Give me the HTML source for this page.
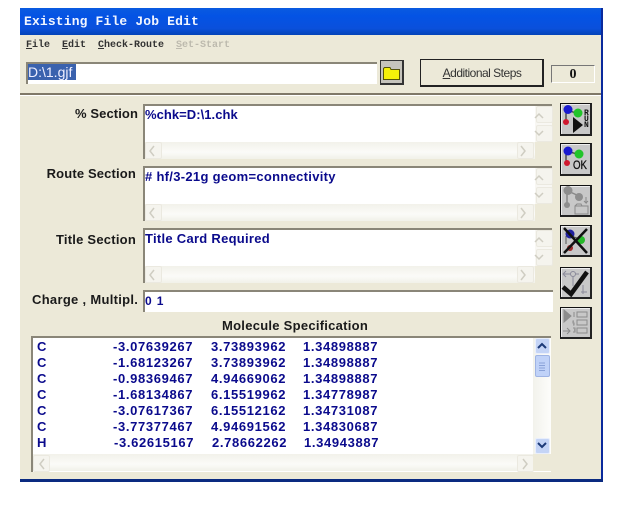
<!DOCTYPE html>
<html><head><meta charset="utf-8">
<style>
html,body{margin:0;padding:0;background:#fff;}
body{width:640px;height:512px;position:relative;overflow:hidden;}
div,span,svg{position:absolute;box-sizing:border-box;}
.t{white-space:pre;font-family:"Liberation Sans",sans-serif;font-size:13px;font-weight:bold;line-height:14px;}
.lab{color:#1a1a1a;text-align:right;}
.val{color:#0a0a8c;}
.mono{font-family:"Liberation Mono",monospace;white-space:pre;}
.m{font:bold 10px/13px "Liberation Mono",monospace;white-space:pre;color:#333;top:39px;}
.box{background:#fff;border-top:2px solid #8a8678;border-left:2px solid #8a8678;}
.hs{position:absolute;height:17px;background:linear-gradient(#f2f1ea,#fbfbf8 60%,#f1f1e9);}
.sb{position:absolute;width:17px;height:17px;border:1px solid #ebe9e0;background:#f5f4ee;border-radius:2px;}
.cn{position:absolute;width:17px;height:17px;background:#ece9d8;}
.ib{position:absolute;left:560px;width:32px;height:32px;background:#c8c8c8;border:1px solid #111;border-right:2px solid #222;border-bottom:2px solid #222;box-shadow:inset 1px 1px 0 #eee;}
.row{position:absolute;color:#0a0a8c;font:bold 13px/16px "Liberation Sans",sans-serif;letter-spacing:.65px;white-space:pre;}
</style></head><body>
<div style="left:20px;top:8px;width:583px;height:474px;background:#ece9d8;"></div>
<div style="left:20px;top:8px;width:583px;height:27px;background:linear-gradient(#0a5be0,#0453e4 30%,#0a50dc 75%,#0443b8);"></div>
<div style="left:601px;top:8px;width:2px;height:474px;background:#0a2a9c;"></div>
<div style="left:20px;top:479px;width:583px;height:3px;background:#0a2a80;"></div>

<div class="t mono" style="left:24px;top:14px;color:#f2f6ff;font-family:'Liberation Mono',monospace;font-size:13px;letter-spacing:.15px;line-height:15px;">Existing File Job Edit</div>

<div class="m" style="left:26px;"><u>F</u>ile</div>
<div class="m" style="left:62px;"><u>E</u>dit</div>
<div class="m" style="left:98px;"><u>C</u>heck-Route</div>
<div class="m" style="left:176px;color:#bdbaae;"><u>S</u>et-Start</div>

<div class="box" style="left:26px;top:62px;width:351px;height:22px;"></div>
<div style="left:28px;top:64px;width:48px;height:16px;background:#3a62ae;"></div>
<div class="t" style="left:28px;top:65px;color:#eef;font-weight:normal;font-size:14px;">D:\1.gjf</div>

<div style="left:380px;top:60px;width:24px;height:25px;background:#c6c4bc;border:1px solid #333;border-right:2px solid #333;border-bottom:2px solid #333;"></div>
<svg style="left:383px;top:66px" width="18" height="14" viewBox="0 0 18 14"><path d="M.5 2.500V13.500H16.500V3.500H8L7 1.500H1.500Z" fill="#f5f00a" stroke="#55530a"/></svg>

<div style="left:420px;top:59px;width:124px;height:28px;background:#ece9d8;border:1px solid #222;border-right:2px solid #222;border-bottom:2px solid #222;"></div>
<div class="t" style="left:420px;top:66px;width:124px;text-align:center;font-weight:normal;font-size:12px;color:#333;letter-spacing:-.5px;"><u>A</u>dditional Steps</div>

<div style="left:551px;top:65px;width:44px;height:18px;border-top:1px solid #777;border-left:1px solid #777;border-right:1px solid #fff;border-bottom:1px solid #fff;"></div>
<div class="t" style="left:551px;top:68px;width:44px;text-align:center;font-family:'Liberation Serif',serif;font-size:14px;color:#111;">0</div>

<div style="left:20px;top:93px;width:581px;height:2px;background:#7f7868;"></div>
<div style="left:20px;top:95px;width:581px;height:1px;background:#fff;"></div>

<!-- labels -->
<div class="t lab" style="left:30px;top:107px;width:108px;letter-spacing:.1px;">% Section</div>
<div class="t lab" style="left:30px;top:167px;width:106px;letter-spacing:.15px;">Route Section</div>
<div class="t lab" style="left:30px;top:233px;width:106px;letter-spacing:.23px;">Title Section</div>
<div class="t lab" style="left:32px;top:293px;width:110px;letter-spacing:.3px;text-align:left;">Charge , Multipl.</div>
<div class="t lab" style="left:222px;top:319px;width:150px;letter-spacing:.27px;text-align:left;">Molecule Specification</div>

<!-- section 1 -->
<div class="box" style="left:143px;top:104px;width:409px;height:55px;"></div>
<div class="t val" style="left:145px;top:108px;letter-spacing:.05px;">%chk=D:\1.chk</div>
<div class="hs" style="left:145px;top:142px;width:390px;"></div>
<div class="sb" style="left:145px;top:142px;"></div>
<div class="sb" style="left:517px;top:142px;"></div>
<div class="cn" style="left:535px;top:142px;"></div>
<div style="left:535px;top:106px;width:17px;height:36px;background:#f8f7f3;"></div>
<div class="sb" style="left:536px;top:106px;"></div>
<div class="sb" style="left:536px;top:125px;"></div>
<!-- section 2 -->
<div class="box" style="left:143px;top:166px;width:409px;height:55px;"></div>
<div class="t val" style="left:145px;top:170px;letter-spacing:.3px;"># hf/3-21g geom=connectivity</div>
<div class="hs" style="left:145px;top:204px;width:390px;"></div>
<div class="sb" style="left:145px;top:204px;"></div>
<div class="sb" style="left:517px;top:204px;"></div>
<div class="cn" style="left:535px;top:204px;"></div>
<div style="left:535px;top:168px;width:17px;height:36px;background:#f8f7f3;"></div>
<div class="sb" style="left:536px;top:168px;"></div>
<div class="sb" style="left:536px;top:187px;"></div>
<!-- section 3 -->
<div class="box" style="left:143px;top:228px;width:409px;height:55px;"></div>
<div class="t val" style="left:145px;top:232px;letter-spacing:.28px;">Title Card Required</div>
<div class="hs" style="left:145px;top:266px;width:390px;"></div>
<div class="sb" style="left:145px;top:266px;"></div>
<div class="sb" style="left:517px;top:266px;"></div>
<div class="cn" style="left:535px;top:266px;"></div>
<div style="left:535px;top:230px;width:17px;height:36px;background:#f8f7f3;"></div>
<div class="sb" style="left:536px;top:230px;"></div>
<div class="sb" style="left:536px;top:249px;"></div>
<svg style="left:143px;top:104px" width="409" height="180" viewBox="0 0 409 180" fill="none" stroke="#cfcdc2" stroke-width="1.500">
<path d="M11 42l-4 5 4 5M378 42l4 5-4 5M392 14l4-4 4 4M392 27l4 4 4-4"/>
<path d="M11 104l-4 5 4 5M378 104l4 5-4 5M392 76l4-4 4 4M392 89l4 4 4-4"/>
<path d="M11 166l-4 5 4 5M378 166l4 5-4 5M392 138l4-4 4 4M392 151l4 4 4-4"/>
</svg>

<!-- charge -->
<div class="box" style="left:143px;top:290px;width:410px;height:22px;"></div>
<div class="t val" style="left:145px;top:294px;font-size:12px;letter-spacing:.9px;">0 1</div>

<!-- list -->
<div class="box" style="left:31px;top:336px;width:520px;height:136px;"></div>
<div class="row" style="left:37px;top:339px;">C</div><div class="row" style="left:113px;top:339px;">-3.07639267</div><div class="row" style="left:211px;top:339px;">3.73893962</div><div class="row" style="left:303px;top:339px;">1.34898887</div>
<div class="row" style="left:37px;top:355px;">C</div><div class="row" style="left:113px;top:355px;">-1.68123267</div><div class="row" style="left:211px;top:355px;">3.73893962</div><div class="row" style="left:303px;top:355px;">1.34898887</div>
<div class="row" style="left:37px;top:371px;">C</div><div class="row" style="left:113px;top:371px;">-0.98369467</div><div class="row" style="left:211px;top:371px;">4.94669062</div><div class="row" style="left:303px;top:371px;">1.34898887</div>
<div class="row" style="left:37px;top:387px;">C</div><div class="row" style="left:113px;top:387px;">-1.68134867</div><div class="row" style="left:211px;top:387px;">6.15519962</div><div class="row" style="left:303px;top:387px;">1.34778987</div>
<div class="row" style="left:37px;top:403px;">C</div><div class="row" style="left:113px;top:403px;">-3.07617367</div><div class="row" style="left:211px;top:403px;">6.15512162</div><div class="row" style="left:303px;top:403px;">1.34731087</div>
<div class="row" style="left:37px;top:419px;">C</div><div class="row" style="left:113px;top:419px;">-3.77377467</div><div class="row" style="left:211px;top:419px;">4.94691562</div><div class="row" style="left:303px;top:419px;">1.34830687</div>
<div class="row" style="left:37px;top:435px;">H</div><div class="row" style="left:114px;top:435px;">-3.62615167</div><div class="row" style="left:212px;top:435px;">2.78662262</div><div class="row" style="left:304px;top:435px;">1.34943887</div>

<div class="hs" style="left:33px;top:454px;width:500px;"></div>
<div class="sb" style="left:33px;top:455px;"></div>
<div class="sb" style="left:517px;top:455px;"></div>
<div class="cn" style="left:533px;top:454px;width:18px;"></div>
<div style="left:533px;top:338px;width:18px;height:116px;background:linear-gradient(90deg,#f2f2ec,#fdfdfb);"></div>
<div style="left:535px;top:338px;width:15px;height:16px;background:#c4d4f6;border:1px solid #e8eefc;border-radius:2px;"></div>
<div style="left:535px;top:355px;width:15px;height:22px;background:#c0d2f8;border:1px solid #9fb4e4;border-radius:2px;"></div>
<div style="left:535px;top:438px;width:15px;height:16px;background:#c4d4f6;border:1px solid #e8eefc;border-radius:2px;"></div>
<svg style="left:533px;top:338px" width="18" height="116" viewBox="0 0 18 116" fill="none" stroke="#1c3a78" stroke-width="2">
<path d="M5 10l4-4 4 4M5 105l4 4 4-4"/>
<path d="M6 25h6M6 27.500h6M6 30h6M6 32.500h6" stroke="#8aa2d8" stroke-width="1"/>
</svg>
<svg style="left:33px;top:455px" width="500" height="17" viewBox="0 0 500 17" fill="none" stroke="#cfcdc2" stroke-width="1.500">
<path d="M11 4l-4 5 4 5M490 4l4 5-4 5"/>
</svg>

<!-- toolbar buttons -->
<div class="ib" style="top:103px;height:33px;"></div>
<svg style="left:561px;top:105px" width="29" height="29" viewBox="0 0 29 29">
<path d="M7 6L17 8M5 6V17" stroke="#111" fill="none"/>
<circle cx="7" cy="4.500" r="4.500" fill="#1a1ad0"/><circle cx="17" cy="8" r="4.500" fill="#22c42a"/><circle cx="5" cy="17" r="3" fill="#d01830"/>
<path d="M12 12L22 20L12 28Z" fill="#111"/>
<text x="23" y="10" font-family="Liberation Mono,monospace" font-size="8" font-weight="bold" fill="#111">R</text>
<text x="23" y="16" font-family="Liberation Mono,monospace" font-size="8" font-weight="bold" fill="#111">U</text>
<text x="23" y="22" font-family="Liberation Mono,monospace" font-size="8" font-weight="bold" fill="#111">N</text>
</svg>
<div class="ib" style="top:143px;height:33px;"></div>
<svg style="left:561px;top:145px" width="29" height="29" viewBox="0 0 29 29">
<path d="M7 7L18 9M5 8V18" stroke="#111" fill="none"/>
<circle cx="7" cy="6" r="4.500" fill="#1a1ad0"/><circle cx="18" cy="9" r="4.500" fill="#22c42a"/><circle cx="6" cy="18" r="3" fill="#d01830"/>
<text x="12" y="24" font-family="Liberation Sans,sans-serif" font-size="12" fill="#111" stroke="#111" stroke-width=".3" textLength="14" lengthAdjust="spacingAndGlyphs">OK</text>
</svg>
<div class="ib" style="top:185px;"></div>
<svg style="left:561px;top:186px" width="29" height="29" viewBox="0 0 29 29">
<path d="M7 5L18 10M6 6V19" stroke="#888" stroke-width="1.500" fill="none"/>
<circle cx="7" cy="4.500" r="4.500" fill="#8e8e8e"/><circle cx="18" cy="11" r="4" fill="#8e8e8e"/><circle cx="6" cy="19" r="3" fill="#8e8e8e"/>
<path d="M14 20h13v8H14zM14 20l2-2h4l1 2M25 11v6l-2-2M25 17l2-2" fill="none" stroke="#8a8a8a"/>
</svg>
<div class="ib" style="top:225px;"></div>
<svg style="left:561px;top:226px" width="29" height="29" viewBox="0 0 29 29">
<path d="M7 9L16 12M5 10V18" stroke="#555" fill="none"/>
<circle cx="9" cy="8" r="4.500" fill="#2020a0"/><circle cx="20" cy="14" r="4" fill="#25b82a"/><circle cx="9" cy="22" r="3" fill="#a02a2a"/>
<path d="M3 2L26 27M26 3L3 27" stroke="#111" stroke-width="2.500" fill="none"/>
</svg>
<div class="ib" style="top:267px;"></div>
<svg style="left:561px;top:268px" width="29" height="29" viewBox="0 0 29 29">
<path d="M3 6H18M12 8V18M5 3L2 6L5 9M20 24h6M22 17V26" stroke="#8a8a9a" fill="none"/>
<circle cx="12" cy="6" r="2.500" fill="#c8c8c8" stroke="#8a8a9a"/>
<path d="M2 19L10 26L26 4" stroke="#111" stroke-width="4.500" fill="none"/>
</svg>
<div class="ib" style="top:307px;"></div>
<svg style="left:561px;top:308px" width="29" height="29" viewBox="0 0 29 29" fill="none" stroke="#8c8c8c">
<path d="M3 2L10 8L3 14Z" fill="#8c8c8c"/>
<path d="M16 4h10v5H16zM16 12h10v5H16zM16 20h10v5H16zM13 4v5M13 13h-1v2h1v2h-1M12 20h2v2h-1l1 0v2h-2M2 23h7M6 20l3 3-3 3"/>
</svg>
</body></html>
